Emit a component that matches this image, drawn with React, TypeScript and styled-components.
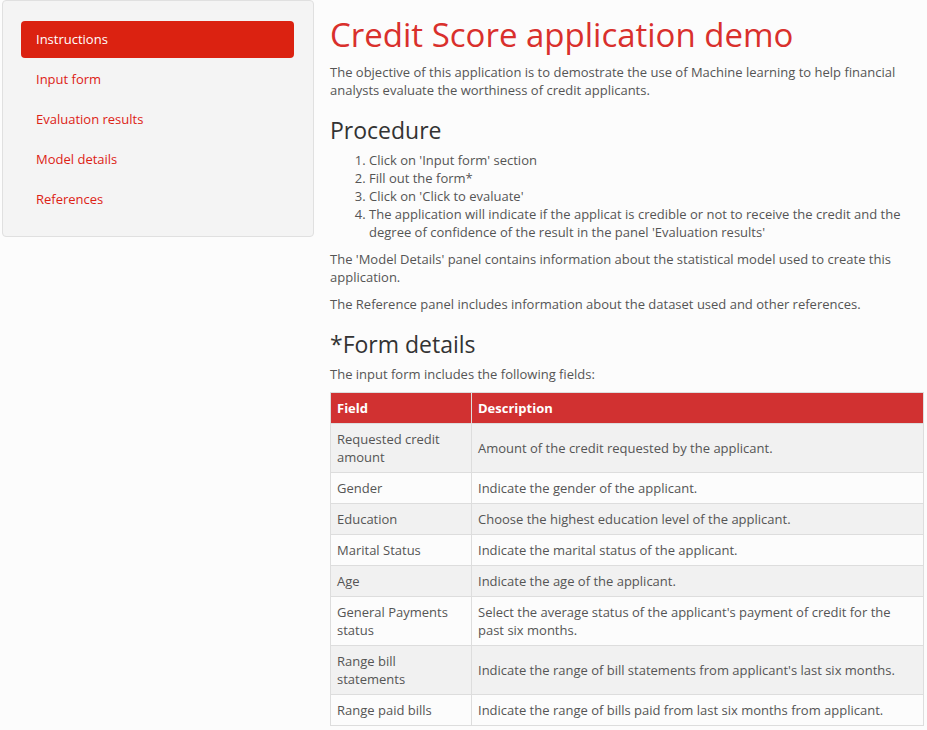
import React from 'react';
import styled, { createGlobalStyle } from 'styled-components';

const GlobalStyle = createGlobalStyle`
  body {
    margin: 0;
    background: #fcfcfc;
    font-family: 'Open Sans', 'Liberation Sans', sans-serif;
    font-size: 13px;
    line-height: 18px;
    color: #555;
  }
`;

const Page = styled.div`
  display: flex;
  align-items: flex-start;
  gap: 16px;
  padding: 0 3px 0 2px;
`;

const Sidebar = styled.nav`
  width: 312px;
  box-sizing: border-box;
  flex-shrink: 0;
  background: #f4f4f4;
  border: 1px solid #e0e0e0;
  border-radius: 4px;
  padding: 20px 19px 18px 18px;
  display: flex;
  flex-direction: column;
  gap: 3px;
`;

const NavItem = styled.a<{ active?: boolean }>`
  display: block;
  height: 37px;
  line-height: 37px;
  padding: 0 15px;
  border-radius: 4px;
  text-decoration: none;
  font-size: 13px;
  color: ${({ active }) => (active ? '#fff' : '#dd2214')};
  background: ${({ active }) => (active ? '#db2211' : 'transparent')};
`;

const Main = styled.main`
  width: 594px;
  flex-shrink: 0;
`;

const Title = styled.h1`
  margin: 15px 0 8px;
  font-size: 33px;
  line-height: 40px;
  font-weight: 400;
  color: #d9302c;
`;

const Heading = styled.h3<{ gap: number }>`
  margin: ${({ gap }) => gap}px 0 8px;
  font-size: 23px;
  line-height: 26px;
  font-weight: 400;
  color: #333;
`;

const Paragraph = styled.p`
  margin: 0 0 9px;
`;

const Steps = styled.ol`
  margin: 0 0 9px;
  padding-left: 39px;
`;

const Table = styled.table`
  width: 100%;
  border-collapse: collapse;
  border: 1px solid #ddd;
  margin-top: 9px;
`;

const HeadCell = styled.th`
  background: #d13131;
  color: #fff;
  font-weight: 700;
  text-align: left;
  padding: 6px 6px 6px 6px;
  border: 1px solid #ddd;
  border-top: none;
`;

const Row = styled.tr`
  &:nth-child(odd) {
    background: #f1f1f1;
  }
`;

const Cell = styled.td<{ narrow?: boolean }>`
  padding: 6px 6px;
  border: 1px solid #ddd;
  vertical-align: middle;
  width: ${({ narrow }) => (narrow ? '128px' : 'auto')};
`;

const navItems = ['Instructions', 'Input form', 'Evaluation results', 'Model details', 'References'];

const steps = [
  "Click on 'Input form' section",
  'Fill out the form*',
  "Click on 'Click to evaluate'",
  "The application will indicate if the applicat is credible or not to receive the credit and the degree of confidence of the result in the panel 'Evaluation results'"
];

const fields: [string, string][] = [
  ['Requested credit amount', 'Amount of the credit requested by the applicant.'],
  ['Gender', 'Indicate the gender of the applicant.'],
  ['Education', 'Choose the highest education level of the applicant.'],
  ['Marital Status', 'Indicate the marital status of the applicant.'],
  ['Age', 'Indicate the age of the applicant.'],
  ['General Payments status', "Select the average status of the applicant's payment of credit for the past six months."],
  ['Range bill statements', "Indicate the range of bill statements from applicant's last six months."],
  ['Range paid bills', 'Indicate the range of bills paid from last six months from applicant.']
];

const App = () => (
  <>
    <GlobalStyle />
    <Page>
      <Sidebar>
        {navItems.map((item, i) => (
          <NavItem key={item} href="#" active={i === 0}>
            {item}
          </NavItem>
        ))}
      </Sidebar>
      <Main>
        <Title>Credit Score application demo</Title>
        <Paragraph>
          The objective of this application is to demostrate the use of Machine learning to help financial
          analysts evaluate the worthiness of credit applicants.
        </Paragraph>
        <Heading gap={18}>Procedure</Heading>
        <Steps>
          {steps.map((s) => (
            <li key={s}>{s}</li>
          ))}
        </Steps>
        <Paragraph>
          The 'Model Details' panel contains information about the statistical model used to create this
          application.
        </Paragraph>
        <Paragraph>The Reference panel includes information about the dataset used and other references.</Paragraph>
        <Heading gap={18}>*Form details</Heading>
        <Paragraph>The input form includes the following fields:</Paragraph>
        <Table>
          <thead>
            <tr>
              <HeadCell>Field</HeadCell>
              <HeadCell>Description</HeadCell>
            </tr>
          </thead>
          <tbody>
            {fields.map(([field, desc]) => (
              <Row key={field}>
                <Cell narrow>{field}</Cell>
                <Cell>{desc}</Cell>
              </Row>
            ))}
          </tbody>
        </Table>
      </Main>
    </Page>
  </>
);

export default App;
